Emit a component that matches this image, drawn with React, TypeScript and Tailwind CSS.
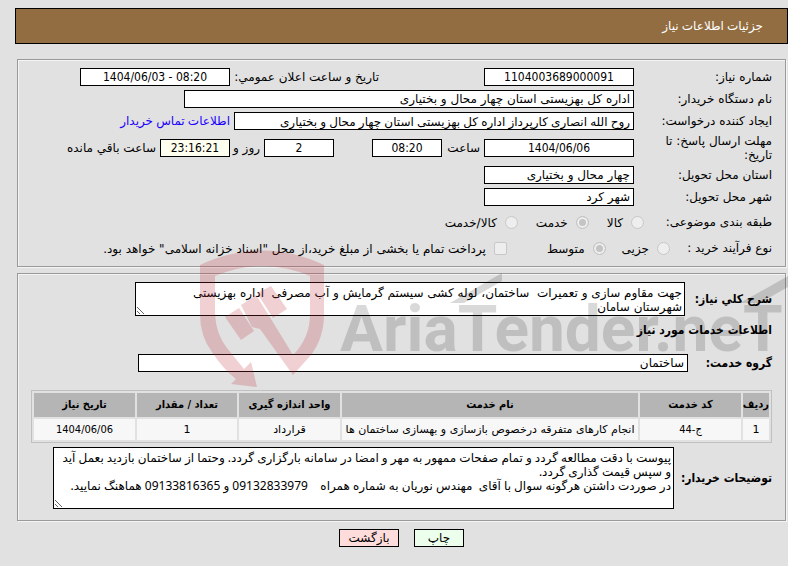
import { ReactNode } from "react";

const inputClass =
  "h-[18px] min-w-0 border border-black bg-white px-[3px] text-[12px] leading-4 text-black outline-none";

const numberClass =
  "text-center font-['DejaVu_Sans_Condensed','DejaVu_Sans',sans-serif]";

const boldClass =
  "font-['DejaVu_Sans_Condensed','DejaVu_Sans',sans-serif] font-bold";

const services = [
  {
    row: "1",
    code: "ج-44",
    name: "انجام کارهای متفرقه درخصوص بازسازی و بهسازی ساختمان ها",
    unit: "قرارداد",
    amount: "1",
    date: "1404/06/06",
  },
];

const Section = ({ children }: { children: ReactNode }) => {
  return (
    <section className="mr-[2px] ml-[2px] border border-[#9a9a9a] shadow-[inset_1px_1px_0_#f4f4f4,1px_1px_0_#f4f4f4]">
      {children}
    </section>
  );
};

const Choice = ({
  id,
  type,
  name,
  label,
  checked,
}: {
  id: string;
  type: "radio" | "checkbox";
  name: string;
  label: string;
  checked?: boolean;
}) => {
  return (
    <div className="flex items-center gap-2">
      <input
        id={id}
        type={type}
        name={name}
        defaultChecked={checked}
        disabled
        className={
          type === "radio"
            ? "size-[13px] shrink-0 appearance-none rounded-full border border-[#c8c8c8] bg-[#eeeeee] checked:border-[#c4c4c4] checked:bg-[#c4c4c4] checked:shadow-[inset_0_0_0_2px_#eeeeee]"
            : "size-[13px] shrink-0 appearance-none rounded-[2px] border border-[#c8c8c8] bg-[#eeeeee]"
        }
      />
      <label htmlFor={id} className="pt-[2px] whitespace-nowrap">
        {label}
      </label>
    </div>
  );
};

const Watermark = () => {
  return (
    <div className="pointer-events-none absolute inset-x-0 top-[248px] h-[142px] overflow-hidden">
      <svg
        className="absolute top-0 left-[198px] h-[142px] w-[130px]"
        viewBox="198 248 130 142"
        fill="#b92b32"
        fillOpacity="0.22"
      >
        <path d="M200 265 Q262 236 324 265 V314 Q324 338 311 355 L293 375 L260 329 L252 327 L241 305 L256 295 L271 319 L293 355 Q310 338 310 314 V276 Q262 256 215 276 V314 Q216 334 227 348 L244 369 L251 362 L257 387 L231 384 L236 379 Q223 369 212 352 Q200 336 200 314 Z" />
        <path d="M225 317 L239 308 L254 331 L241 340 Z" />
        <path d="M257 293 L271 286 L287 309 L273 318 Z" />
      </svg>
      <div
        dir="ltr"
        className="absolute top-[34px] left-[340px] font-['Roboto',sans-serif] text-[64px] leading-[96px] font-bold whitespace-nowrap text-black/15"
      >
        AriaTender.neT
      </div>
      <svg
        className="absolute top-0 left-[440px] h-[142px] w-[348px]"
        viewBox="440 248 348 142"
        fill="#000000"
        fillOpacity="0.15"
      >
        <path d="M450 303 L502 273 V281 L464 303 Z" />
        <path d="M740 303 L788 276 V287 L760 303 Z" />
      </svg>
    </div>
  );
};

export default function App() {
  return (
    <div
      dir="rtl"
      className="relative min-h-screen bg-[#e1e1e1] pt-2 pl-[15px] font-['DejaVu_Sans',sans-serif] text-[12px] leading-[14px] text-black"
    >
      <header className="mb-[15px] flex h-9 items-center border border-black bg-[#916d41] px-6">
        <h1 className="font-['Noto_Sans','DejaVu_Sans',sans-serif] text-white">
          جزئیات اطلاعات نیاز
        </h1>
      </header>

      <main>
        <Section>
          <div className="pt-[6px] pr-[13px] pb-[6px]">
            <div className="flex h-[22px] items-center">
              <label htmlFor="number" className="w-[138px] shrink-0">
                شماره نیاز:
              </label>
              <input
                id="number"
                readOnly
                dir="ltr"
                defaultValue="1104003689000091"
                className={`${inputClass} ${numberClass} w-[150px]`}
              />
              <label
                htmlFor="announce"
                className="mr-[105px] w-[149px] shrink-0 whitespace-nowrap"
              >
                تاریخ و ساعت اعلان عمومي:
              </label>
              <input
                id="announce"
                readOnly
                dir="ltr"
                defaultValue="1404/06/03 - 08:20"
                className={`${inputClass} ${numberClass} w-[150px]`}
              />
            </div>
            <div className="flex h-[22px] items-center">
              <label htmlFor="buyer" className="w-[138px] shrink-0">
                نام دستگاه خریدار:
              </label>
              <input
                id="buyer"
                readOnly
                defaultValue="اداره کل بهزیستی استان چهار محال و بختیاری"
                className={`${inputClass} w-[450px]`}
              />
            </div>
            <div className="flex h-[22px] items-center">
              <label htmlFor="creator" className="w-[138px] shrink-0">
                ایجاد کننده درخواست:
              </label>
              <input
                id="creator"
                readOnly
                defaultValue="روح الله انصاری کارپرداز اداره کل بهزیستی استان چهار محال و بختیاری"
                className={`${inputClass} w-[400px] font-['Noto_Sans','DejaVu_Sans',sans-serif]`}
              />
              <a
                href="#contact"
                className="mr-1 font-['Noto_Sans','DejaVu_Sans',sans-serif] whitespace-nowrap text-[#1a00ff]"
              >
                اطلاعات تماس خریدار
              </a>
            </div>
            <div className="flex h-8 items-center">
              <label htmlFor="deadline" className="w-[138px] shrink-0 pl-6">
                مهلت ارسال پاسخ: تا تاریخ:
              </label>
              <input
                id="deadline"
                readOnly
                dir="ltr"
                defaultValue="1404/06/06"
                className={`${inputClass} ${numberClass} w-[150px]`}
              />
              <label htmlFor="hour" className="w-[42px] shrink-0 pr-1">
                ساعت
              </label>
              <input
                id="hour"
                readOnly
                dir="ltr"
                defaultValue="08:20"
                className={`${inputClass} ${numberClass} w-[70px]`}
              />
              <input
                id="days"
                readOnly
                defaultValue="2"
                className={`${inputClass} ${numberClass} mr-[38px] w-[70px]`}
              />
              <label htmlFor="days" className="w-[34px] shrink-0 pr-1 whitespace-nowrap">
                روز و
              </label>
              <input
                id="remaining"
                readOnly
                dir="ltr"
                defaultValue="23:16:21"
                className={`${numberClass} h-[18px] w-[70px] border border-black bg-[#fffff0] px-[3px] text-[12px] leading-4 outline-none`}
              />
              <label htmlFor="remaining" className="pr-1 whitespace-nowrap">
                ساعت باقي مانده
              </label>
            </div>
            <div className="flex h-[22px] items-center">
              <label htmlFor="province" className="w-[138px] shrink-0">
                استان محل تحویل:
              </label>
              <input
                id="province"
                readOnly
                defaultValue="چهار محال و بختیاری"
                className={`${inputClass} w-[150px]`}
              />
            </div>
            <div className="flex h-[22px] items-center">
              <label htmlFor="city" className="w-[138px] shrink-0">
                شهر محل تحویل:
              </label>
              <input
                id="city"
                readOnly
                defaultValue="شهر کرد"
                className={`${inputClass} w-[150px]`}
              />
            </div>
            <div className="flex h-7 items-center">
              <span className="w-[128px] shrink-0">طبقه بندی موضوعی:</span>
              <div className="flex gap-[18px]">
                <Choice id="goods" type="radio" name="subject" label="کالا" />
                <Choice id="service" type="radio" name="subject" label="خدمت" checked />
                <Choice id="both" type="radio" name="subject" label="کالا/خدمت" />
              </div>
            </div>
            <div className="flex h-6 items-center">
              <span className="w-[102px] shrink-0">نوع فرآیند خرید :</span>
              <div className="flex gap-4">
                <Choice id="small" type="radio" name="process" label="جزیی" />
                <Choice id="medium" type="radio" name="process" label="متوسط" checked />
              </div>
              <div className="mr-10">
                <Choice
                  id="treasury"
                  type="checkbox"
                  name="treasury"
                  label={'پرداخت تمام یا بخشی از مبلغ خرید،از محل "اسناد خزانه اسلامی" خواهد بود.'}
                />
              </div>
            </div>
          </div>
        </Section>

        <div className="h-[6px]" />

        <Section>
          <div className="pt-2 pr-[13px] pb-[11px]">
            <div className="flex items-center">
              <label htmlFor="summary" className={`${boldClass} w-[87px] shrink-0 whitespace-nowrap`}>
                شرح کلي نیاز:
              </label>
              <textarea
                id="summary"
                readOnly
                defaultValue={
                  "جهت مقاوم سازی و تعمیرات  ساختمان، لوله کشی سیستم گرمایش و آب مصرفی  اداره بهزیستی\nشهرستان سامان"
                }
                className="h-[34px] w-[550px] resize overflow-hidden border border-black bg-white px-[2px] pt-[3px] text-[12px] leading-[14px] outline-none"
              />
            </div>
            <h2 className={`${boldClass} mt-[7px] mb-[17px]`}>اطلاعات خدمات مورد نیاز</h2>
            <div className="flex items-center">
              <label htmlFor="group" className={`${boldClass} w-[84px] shrink-0 whitespace-nowrap`}>
                گروه خدمت:
              </label>
              <input
                id="group"
                readOnly
                defaultValue="ساختمان"
                className={`${inputClass} w-[550px]`}
              />
            </div>

            <div className="mt-[18px] ml-[13px]">
              <table className="w-full table-fixed border-separate border-spacing-[2px] border border-[#c0c0c0] text-center text-[11px]">
                <thead className={`${boldClass} bg-[#b5b5b5]`}>
                  <tr className="h-6">
                    <th className="w-[26px] whitespace-nowrap">ردیف</th>
                    <th className="w-[101px]">کد خدمت</th>
                    <th>نام خدمت</th>
                    <th className="w-[101px] whitespace-nowrap">واحد اندازه گیری</th>
                    <th className="w-[100px] whitespace-nowrap">تعداد / مقدار</th>
                    <th className="w-[101px] whitespace-nowrap">تاریخ نیاز</th>
                  </tr>
                </thead>
                <tbody className="bg-[#f7f7f7]">
                  {services.map((service) => (
                    <tr key={service.row} className="h-[21px]">
                      <td>{service.row}</td>
                      <td className={numberClass}>{service.code}</td>
                      <td className="whitespace-nowrap">{service.name}</td>
                      <td>{service.unit}</td>
                      <td>{service.amount}</td>
                      <td className={numberClass}>{service.date}</td>
                    </tr>
                  ))}
                </tbody>
              </table>
            </div>

            <div className="mt-1 flex items-center">
              <label htmlFor="notes" className={`${boldClass} w-[98px] shrink-0 whitespace-nowrap`}>
                توضیحات خریدار:
              </label>
              <textarea
                id="notes"
                readOnly
                defaultValue={
                  "پیوست با دقت مطالعه گردد و تمام صفحات ممهور به مهر و امضا در سامانه بارگزاری گردد. وحتما از ساختمان بازدید بعمل آید\nو سپس قیمت گذاری گردد.\nدر صوردت داشتن هرگونه سوال با آقای  مهندس نوریان به شماره همراه    09132833979 و 09133816365 هماهنگ نمایید."
                }
                className="h-[62px] w-[621px] resize overflow-hidden border border-black bg-white px-[2px] pt-[3px] font-['Noto_Sans','DejaVu_Sans',sans-serif] text-[12px] leading-[14px] outline-none"
              />
            </div>
          </div>
        </Section>

        <div className="mt-2 flex justify-center gap-[15px]">
          <button
            type="button"
            className="h-[18px] w-[50px] border border-black bg-[#ecffec] leading-4"
          >
            چاپ
          </button>
          <button
            type="button"
            className="h-[18px] w-[60px] border border-black bg-[#ffdcdc] leading-4"
          >
            بازگشت
          </button>
        </div>
      </main>

      <Watermark />
    </div>
  );
}
